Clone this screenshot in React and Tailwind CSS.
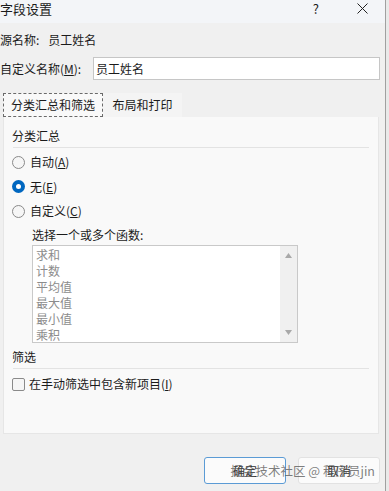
import React from "react";

const FONT = { fontFamily: '"Noto Sans CJK SC", "Noto Sans", sans-serif' };

const FUNCS = ["求和", "计数", "平均值", "最大值", "最小值", "乘积"];

function Radio({ checked, children }) {
  return (
    <div className="flex h-[16px] items-center gap-[5px]">
      {checked ? (
        <span className="flex h-[13px] w-[13px] items-center justify-center rounded-full bg-[#0067c0]">
          <span className="h-[5px] w-[5px] rounded-full bg-white" />
        </span>
      ) : (
        <span className="h-[13px] w-[13px] rounded-full border border-[#8a8a8a] bg-[#f6f6f6]" />
      )}
      <span className="leading-[16px]">{children}</span>
    </div>
  );
}

function GroupTitle({ children }) {
  return (
    <div className="pr-[6px]">
      <div className="leading-[16px]">{children}</div>
      <div className="ml-[1px] mt-[3px] h-px bg-[#e3e3e3]" />
    </div>
  );
}

export default function App() {
  return (
    <div className="relative h-[491px] w-[389px] overflow-hidden bg-[#e9e9e9] text-[12px] text-[#1b1b1b]" style={FONT}>
      <div className="absolute right-[3px] top-0 h-full w-px bg-[#a0a0a0]" />
      <div className="flex h-full w-[385px] flex-col bg-[#f0f0f0]">
        <div className="flex h-[23px] items-center bg-[#f3f5f8] pb-[7px] pr-[17px]">
          <span className="flex-1 text-[13px] leading-none">字段设置</span>
          <span className="mr-[38px] text-[13px] leading-none">?</span>
          <svg width="11" height="11" viewBox="0 0 11 11">
            <path d="M0.5 0.5 L10.5 10.5 M10.5 0.5 L0.5 10.5" stroke="#222" strokeWidth="1" />
          </svg>
        </div>

        <div className="mt-[9px] flex items-center gap-[9px] leading-[16px]">
          <span>源名称:</span>
          <span>员工姓名</span>
        </div>

        <div className="mt-[9px] flex items-center">
          <span className="w-[93px] leading-[16px]">
            自定义名称(<span className="underline">M</span>):
          </span>
          <div className="flex h-[23px] w-[287px] items-center border border-[#c6c6c6] bg-white pl-[2px]">员工姓名</div>
        </div>

        <div className="mt-[13px] flex pl-[3px]">
          <div className="flex h-[24px] w-[100px] items-center justify-center border border-dashed border-[#6a6a6a] bg-[#f9f9f9]">
            分类汇总和筛选
          </div>
          <div className="flex h-[24px] w-[79px] items-center justify-center bg-[#f4f4f4]">布局和打印</div>
        </div>

        <div className="ml-[3px] flex h-[317px] w-[376px] flex-col border border-t-0 border-[#e6e6e6] bg-[#f9f9f9] pl-[8px] pr-[3px] pt-[11px]">
          <GroupTitle>分类汇总</GroupTitle>
          <div className="mt-[6px] flex flex-col gap-[8.5px]">
            <Radio>
              自动(<span className="underline">A</span>)
            </Radio>
            <Radio checked>
              无(<span className="underline">E</span>)
            </Radio>
            <Radio>
              自定义(<span className="underline">C</span>)
            </Radio>
          </div>
          <div className="ml-[20px] mt-[8px] leading-[16px]">选择一个或多个函数:</div>
          <div className="ml-[20px] mt-[2px] flex h-[98px] w-[266px] border border-[#c9c9c9] bg-white">
            <div className="flex flex-1 flex-col pl-[3px] pt-[1px] text-[#8c8c8c]">
              {FUNCS.map((f) => (
                <div key={f} className="leading-[16px]">
                  {f}
                </div>
              ))}
            </div>
            <div className="flex w-[17px] flex-col items-center justify-between bg-[#f0f0f0] py-[7px]">
              <svg width="7" height="5" viewBox="0 0 7 5">
                <path d="M3.5 0 L7 5 L0 5 Z" fill="#a8a8a8" />
              </svg>
              <svg width="7" height="5" viewBox="0 0 7 5">
                <path d="M0 0 L7 0 L3.5 5 Z" fill="#a8a8a8" />
              </svg>
            </div>
          </div>
          <div className="mt-[6px]">
            <GroupTitle>筛选</GroupTitle>
          </div>
          <div className="mt-[7px] flex h-[16px] items-center gap-[4px]">
            <span className="h-[13px] w-[13px] rounded-[2px] border border-[#8a8a8a] bg-[#f6f6f6]" />
            <span className="leading-[16px]">
              在手动筛选中包含新项目(<span className="underline">I</span>)
            </span>
          </div>
        </div>

        <div className="relative mt-[23px] flex justify-end gap-[12px] pr-[5px]">
          <div className="flex h-[27px] w-[82px] items-center justify-center rounded-[3px] border border-[#5b9bd5] bg-[#fbfbfb] text-[#333]">
            确定
          </div>
          <div className="flex h-[27px] w-[82px] items-center justify-center rounded-[3px] border border-[#e2e2e2] bg-[#fbfbfb] text-[#333]">
            取消
          </div>
          <div className="pointer-events-none absolute right-[10px] top-[5px] text-[12.5px] leading-[17px] text-[#555]/75">
            掘金技术社区 @ 程序员jin
          </div>
        </div>
      </div>
    </div>
  );
}
